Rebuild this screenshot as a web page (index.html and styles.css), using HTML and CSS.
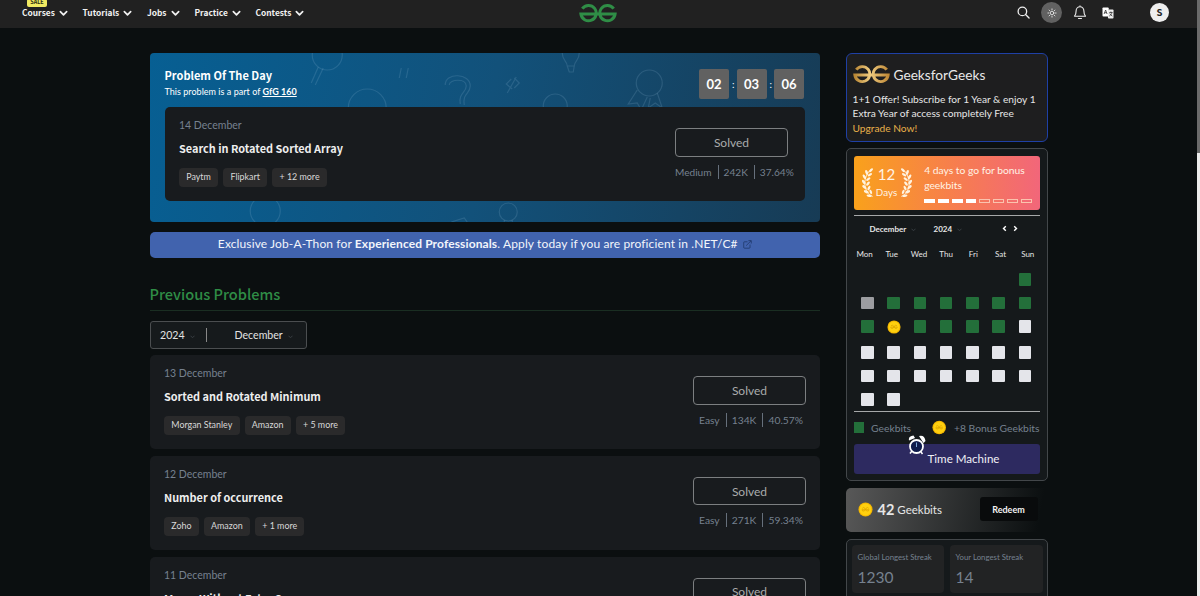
FILE: index.html
```
<!DOCTYPE html>
<html lang="en">
<head>
    <meta charset="UTF-8">
    <meta name="viewport" content="width=device-width, initial-scale=1.0">
    <title>Problem Of The Day | GeeksforGeeks</title>
    <link rel="stylesheet" href="styles.css">
</head>
<body>
    <!-- shared shapes -->
    <svg class="defs" width="0" height="0">
        <defs>
            <symbol id="chevron" viewBox="0 0 10 7"><path d="M1.5 1.5 5 5l3.500-3.500" fill="none" stroke="currentColor" stroke-width="1.900" stroke-linecap="round" stroke-linejoin="round"/></symbol>
            <symbol id="logo" viewBox="0 0 38 20">
                <path d="M3.300 5.600A7.700 7.700 0 1 1 1.900 11H36.100A7.700 7.700 0 1 1 34.700 5.600" fill="none" stroke-width="3"/>
            </symbol>
            <symbol id="coin" viewBox="0 0 16 16">
                <circle cx="8" cy="8" r="7.500" fill="#f5b700"/>
                <circle cx="8" cy="8" r="6.300" fill="#ffd00f"/>
                <path d="M4.500 6.800A1.800 1.800 0 1 1 4.200 8.200H11.800A1.800 1.800 0 1 1 11.500 6.800" fill="none" stroke="#dda400" stroke-width=".8"/>
            </symbol>
            <symbol id="laurel" viewBox="0 0 13 33">
                <path d="M11.500 31C2 27 0 12 8.500 3" fill="none" stroke="#fff3df" stroke-width="1"/>
                <g fill="#fff3df">
                    <ellipse cx="9.800" cy="2.600" rx="2.700" ry="1.300" transform="rotate(-45 9.800 2.600)"/>
                    <ellipse cx="5" cy="5" rx="2.800" ry="1.400" transform="rotate(70 5 5)"/>
                    <ellipse cx="8.500" cy="7.500" rx="2.700" ry="1.300" transform="rotate(-30 8.500 7.500)"/>
                    <ellipse cx="2.600" cy="9.800" rx="2.800" ry="1.400" transform="rotate(60 2.600 9.800)"/>
                    <ellipse cx="6.800" cy="12.300" rx="2.700" ry="1.300" transform="rotate(-35 6.800 12.300)"/>
                    <ellipse cx="1.900" cy="15.500" rx="2.800" ry="1.400" transform="rotate(55 1.900 15.500)"/>
                    <ellipse cx="6.500" cy="17.200" rx="2.700" ry="1.300" transform="rotate(-50 6.500 17.200)"/>
                    <ellipse cx="2.600" cy="21" rx="2.800" ry="1.400" transform="rotate(42 2.600 21)"/>
                    <ellipse cx="7.500" cy="22" rx="2.700" ry="1.300" transform="rotate(-65 7.500 22)"/>
                    <ellipse cx="4.600" cy="26" rx="2.800" ry="1.400" transform="rotate(25 4.600 26)"/>
                    <ellipse cx="9.500" cy="26.200" rx="2.500" ry="1.300" transform="rotate(70 9.500 26.200)"/>
                    <ellipse cx="7.700" cy="30.300" rx="2.800" ry="1.300" transform="rotate(10 7.700 30.300)"/>
                </g>
            </symbol>
        </defs>
    </svg>

    <header class="navbar">
        <ul class="menu">
            <li class="m-courses">Courses <svg><use href="#chevron"/></svg><span class="sale">SALE</span></li>
            <li class="m-tutorials">Tutorials <svg><use href="#chevron"/></svg></li>
            <li class="m-jobs">Jobs <svg><use href="#chevron"/></svg></li>
            <li class="m-practice">Practice <svg><use href="#chevron"/></svg></li>
            <li>Contests <svg><use href="#chevron"/></svg></li>
        </ul>
        <svg class="logo"><use href="#logo"/></svg>
        <div class="tools">
            <svg class="search" viewBox="0 0 14 14"><circle cx="5.800" cy="5.800" r="4.600"/><path d="m9.200 9.200 3.800 3.800"/></svg>
            <span class="theme">
                <svg viewBox="0 0 14 14"><circle cx="7" cy="7" r="2.100"/><path d="M7 2.200v1M7 10.800v1M2.200 7h1M10.800 7h1M3.600 3.600l.7.7M9.700 9.700l.7.7M3.600 10.400l.7-.7M9.700 4.300l.7-.7"/></svg>
            </span>
            <svg class="bell" viewBox="0 0 14 15"><path d="M1.500 11.200h11c-1.300-1.400-1.600-2.300-1.600-5.200C10.900 3.600 9.400 1.800 7 1.800S3.100 3.600 3.100 6c0 2.900-.3 3.800-1.600 5.200zM5.500 13.500h3M7 .8v1"/></svg>
            <svg class="lang" viewBox="0 0 12 12">
                <rect x=".5" y=".5" width="6.200" height="9" rx=".8" fill="#fff"/>
                <rect x="6" y="2.500" width="5.500" height="9" rx=".8" fill="#eee"/>
                <path d="m2.100 7 1.500-4 1.500 4M2.600 5.700h2M7.300 5.500h3.200M8.900 4.500v1M10 5.500c-.4 1.700-1.300 2.700-2.600 3.500M7.800 6.500c.6 1.200 1.300 2 2.600 2.600" fill="none" stroke="#333" stroke-width=".8"/>
            </svg>
            <span class="avatar">S</span>
        </div>
    </header>

    <main class="page">
        <section class="problems">
            <div class="potd">
                <svg class="doodles" viewBox="0 0 670 169">
                    <circle cx="177" cy="2" r="15"/><path d="m168 14-7 16M173 15l-8 17M251 15l-2 10M258 15l-2 10"/>
                    <circle cx="217" cy="55" r="19"/>
                    <path d="M295 32c0-13 25-12 25 1 0 8-8 7-6 19M299 32c0-6 17-7 17 1 0 7-8 7-6 18"/>
                    <circle cx="405" cy="53" r="12"/>
                    <path d="m361 26-5 5 6 5M364 35l5-5-5-5M366 24l-9 16M412 0c0 8 5 8 5 13h7c0-5 5-5 5-13M417 13l2 6h4l1-6"/>
                    <circle cx="499" cy="30" r="13"/>
                    <path d="m487 37-9 14 9-1 4 7 6-13M507 40l5 15-7-5-7 5 2-10"/>
                    <circle cx="115" cy="158" r="15"/><path d="m301 169 13-4 3 4"/>
                    <circle cx="358" cy="159" r="9"/><path d="M354 167v3h8v-3"/>
                </svg>
                <div class="potd-top">
                    <div>
                        <h1>Problem Of The Day</h1>
                        <p>This problem is a part of <a href="#">GfG 160</a></p>
                    </div>
                    <div class="timer">
                        <b>02</b><i>:</i><b>03</b><i>:</i><b>06</b>
                    </div>
                </div>
                <article class="problem problem-today">
                    <div class="info">
                        <span class="date">14 December</span>
                        <h3>Search in Rotated Sorted Array</h3>
                        <div class="tags"><span>Paytm</span><span>Flipkart</span><span>+ 12 more</span></div>
                    </div>
                    <div class="status">
                        <button>Solved</button>
                        <div class="stats"><span>Medium</span><span>242K</span><span>37.64%</span></div>
                    </div>
                </article>
            </div>

            <a class="banner" href="#">
                <span>Exclusive Job-A-Thon for <b>Experienced Professionals</b>. Apply today if you are proficient in .NET/C#</span>
                <svg viewBox="0 0 10 10"><path d="M5 2H1.500Q.8 2 .8 2.700v5.600q0 .8.7.8H7q.8 0 .8-.8V5M3.500 6.300 9 .8M6 .7h3.200v3.200"/></svg>
            </a>

            <h2>Previous Problems</h2>

            <div class="filter">
                <span class="year">2024 <svg><use href="#chevron"/></svg></span>
                <span class="month">December <svg><use href="#chevron"/></svg></span>
            </div>

            <article class="problem">
                <div class="info">
                    <span class="date">13 December</span>
                    <h3>Sorted and Rotated Minimum</h3>
                    <div class="tags"><span>Morgan Stanley</span><span>Amazon</span><span>+ 5 more</span></div>
                </div>
                <div class="status">
                    <button>Solved</button>
                    <div class="stats"><span>Easy</span><span>134K</span><span>40.57%</span></div>
                </div>
            </article>
            <article class="problem">
                <div class="info">
                    <span class="date">12 December</span>
                    <h3>Number of occurrence</h3>
                    <div class="tags"><span>Zoho</span><span>Amazon</span><span>+ 1 more</span></div>
                </div>
                <div class="status">
                    <button>Solved</button>
                    <div class="stats"><span>Easy</span><span>271K</span><span>59.34%</span></div>
                </div>
            </article>
            <article class="problem">
                <div class="info">
                    <span class="date">11 December</span>
                    <h3>Merge Without Extra Space</h3>
                </div>
                <div class="status">
                    <button>Solved</button>
                </div>
            </article>
        </section>

        <aside class="sidebar">
            <div class="offer">
                <div class="brand">
                    <svg viewBox="0 0 38 20">
                        <defs><linearGradient id="gold" x2="1"><stop offset="0" stop-color="#b98735"/><stop offset=".45" stop-color="#efcb80"/><stop offset="1" stop-color="#c08a38"/></linearGradient></defs>
                        <g stroke="url(#gold)"><use href="#logo"/></g>
                    </svg>
                    <span>GeeksforGeeks</span>
                </div>
                <p>1+1 Offer! Subscribe for 1 Year &amp; enjoy 1<br>Extra Year of access completely Free<br><a href="#">Upgrade Now!</a></p>
            </div>

            <div class="streak-card">
                <div class="streak">
                    <div class="wreath">
                        <svg><use href="#laurel"/></svg>
                        <div><b>12</b><span>Days</span></div>
                        <svg class="flip"><use href="#laurel"/></svg>
                    </div>
                    <div class="goal">
                        <p>4 days to go for bonus<br>geekbits</p>
                        <div class="steps">
                            <i class="on"></i><i class="on"></i><i class="on"></i><i class="on"></i><i></i><i></i><i></i><i></i>
                        </div>
                    </div>
                </div>

                <div class="cal-head">
                    <span class="cal-month">December <svg><use href="#chevron"/></svg></span>
                    <span class="cal-year">2024 <svg><use href="#chevron"/></svg></span>
                    <svg class="arrow" viewBox="0 0 5 7"><path d="M3.800 1.200 1.500 3.500l2.300 2.300"/></svg>
                    <svg class="arrow" viewBox="0 0 5 7"><path d="m1.200 1.200 2.300 2.300-2.300 2.300"/></svg>
                </div>
                <div class="weekdays">
                    <span>Mon</span><span>Tue</span><span>Wed</span><span>Thu</span><span>Fri</span><span>Sat</span><span>Sun</span>
                </div>
                <div class="days">
                    <i class="done first"></i>
                    <i class="missed"></i><i class="done"></i><i class="done"></i><i class="done"></i><i class="done"></i><i class="done"></i><i class="done"></i>
                    <i class="done"></i><svg class="coin"><use href="#coin"/></svg><i class="done"></i><i class="done"></i><i class="done"></i><i class="done"></i><i></i>
                    <i></i><i></i><i></i><i></i><i></i><i></i><i></i>
                    <i></i><i></i><i></i><i></i><i></i><i></i><i></i>
                    <i></i><i></i>
                </div>
                <div class="legend">
                    <i></i><span>Geekbits</span>
                    <svg><use href="#coin"/></svg><span class="bonus">+8 Bonus Geekbits</span>
                </div>
                <button class="time-machine">
                    <svg viewBox="0 0 18 20">
                        <g fill="#fff"><path d="M1 5.500Q0 1 5.500.5L7 3zM11 1q5.500-1.500 6.500 5L15.500 8z"/></g>
                        <path d="m4 16-2 2.500M13 17l1.500 2" stroke="#fff" stroke-width="1.500"/>
                        <circle cx="8.500" cy="11.500" r="6.500" fill="#101c4c" stroke="#fff" stroke-width="1.800"/>
                        <path d="M8.500 12V7.500" stroke="#7fa8d8" stroke-width="1"/>
                    </svg>
                    Time Machine
                </button>
            </div>

            <div class="geekbits">
                <svg><use href="#coin"/></svg>
                <b>42</b><span>Geekbits</span>
                <button>Redeem</button>
            </div>

            <div class="longest">
                <div><span>Global Longest Streak</span><b>1230</b></div>
                <div><span>Your Longest Streak</span><b>14</b></div>
            </div>
        </aside>
    </main>
    <div class="scrollbar"><i></i></div>
</body>
</html>
```
FILE: styles.css
```
* {
    box-sizing: border-box;
}

body {
    margin: 0;
    height: 596px;
    overflow: hidden;
    background-color: #0b0f10;
    color: #e6e6e6;
    font-family: Lato, "Open Sans", sans-serif;
    font-size: 11px;
}

h1, h2, h3, p, ul {
    margin: 0;
    padding: 0;
}

h1, h2, h3, .menu, .avatar {
    font-family: "Noto Sans CJK SC", "Noto Sans", sans-serif;
}

i {
    font-style: normal;
}

button {
    font-family: inherit;
    padding: 0;
}

.defs {
    position: absolute;
}

/* top navigation */
.navbar {
    display: grid;
    grid-template-columns: 579px 38px 1fr;
    height: 28px;
    padding-right: 31px;
    background-color: #212121;
}

.menu {
    display: flex;
    list-style: none;
    padding-left: 22px;
    height: 24px;
    align-items: center;
    font-size: 8.4px;
    font-weight: 700;
    line-height: 12px;
    color: #f1f1f1;
}

.menu li {
    position: relative;
    display: flex;
    align-items: center;
    gap: 4px;
}

.menu svg {
    width: 9px;
    height: 7px;
    margin-top: 2px;
}

.m-courses {
    width: 60.500px;
}

.m-tutorials {
    width: 64.500px;
}

.m-jobs {
    width: 47.500px;
}

.m-practice {
    width: 61px;
}

.sale {
    position: absolute;
    left: 5px;
    top: -7px;
    width: 20px;
    height: 8px;
    border-radius: 2px;
    background-color: #f1ea62;
    color: #2b2a10;
    font-size: 5.5px;
    line-height: 7px;
    text-align: center;
}

.logo {
    width: 38px;
    height: 20px;
    margin-top: 3px;
    stroke: #2f8d46;
}

.tools {
    display: flex;
    justify-content: flex-end;
    align-items: center;
    height: 25px;
}

.search {
    width: 13px;
    height: 13px;
    margin-right: 11px;
    fill: none;
    stroke: #eee;
    stroke-width: 1.4;
    stroke-linecap: round;
}

.theme {
    display: flex;
    align-items: center;
    justify-content: center;
    width: 21px;
    height: 21px;
    margin-right: 11px;
    border-radius: 50%;
    background-color: #616161;
}

.theme svg {
    width: 12px;
    height: 12px;
    fill: none;
    stroke: #eee;
    stroke-width: 1;
    stroke-linecap: round;
}

.bell {
    width: 14px;
    height: 15px;
    margin-right: 15px;
    fill: none;
    stroke: #eee;
    stroke-width: 1.1;
    stroke-linejoin: round;
    stroke-linecap: round;
}

.lang {
    width: 12px;
    height: 12px;
    margin-right: 36px;
}

.avatar {
    width: 19px;
    height: 19px;
    border-radius: 50%;
    background-color: #eee;
    color: #222;
    font-size: 9.5px;
    font-weight: 700;
    line-height: 18px;
    text-align: center;
}

.page {
    display: grid;
    grid-template-columns: 670.5px 202px;
    column-gap: 25.500px;
    align-items: start;
    padding: 25px 0 0 149.5px;
    height: 568px;
    overflow: hidden;
}

/* problem of the day */
.potd {
    position: relative;
    height: 169px;
    padding: 0 15px;
    border-radius: 4px;
    background: linear-gradient(100deg, #075f93 0%, #12517a 50%, #173b55 100%);
}

.doodles {
    position: absolute;
    left: 0;
    top: 0;
    width: 100%;
    height: 100%;
    fill: none;
    stroke: rgba(150, 190, 215, .18);
    stroke-width: 1.2;
}

.potd-top {
    position: relative;
    display: flex;
    justify-content: space-between;
    height: 54px;
    color: #fff;
}

.potd h1 {
    margin-top: 15px;
    font-size: 11px;
    line-height: 15px;
}

.potd p {
    font-size: 9px;
    line-height: 17px;
    letter-spacing: .03px;
}

.potd p a {
    color: #fff;
    font-weight: 700;
}

.timer {
    display: flex;
    gap: 3px;
    margin: 16px 1px 0 0;
    line-height: 30px;
}

.timer b {
    width: 30px;
    height: 30px;
    border-radius: 2px;
    background-color: #616161;
    font-size: 13px;
    text-align: center;
}

.timer i {
    width: 1.5px;
    font-size: 10px;
}

.problem {
    display: flex;
    justify-content: space-between;
    height: 94px;
    margin-bottom: 6.800px;
    padding: 0 14.500px;
    border-radius: 5px;
    background-color: #181b1e;
}

.problem-today {
    position: relative;
    padding-right: 11px;
}

.date {
    display: block;
    margin-top: 10px;
    font-size: 10.5px;
    line-height: 16px;
    color: #76818f;
}

.problem h3 {
    margin-top: 6px;
    font-size: 10.9px;
    line-height: 18px;
    color: #eee;
}

.tags {
    display: flex;
    gap: 5px;
    margin-top: 11px;
}

.tags span {
    height: 19px;
    padding: 0 7.3px;
    border-radius: 4px;
    background-color: #2a2a2b;
    color: #d8d8d8;
    font-size: 8.9px;
    line-height: 18px;
}

.status {
    width: 112.5px;
    padding-top: 21px;
}

.problem-today .status {
    width: 119px;
}

.status button {
    display: block;
    width: 113px;
    height: 28.500px;
    border: 1px solid #7c7f81;
    border-radius: 4px;
    background: none;
    color: #a9abac;
    font-size: 12px;
}

.stats {
    display: flex;
    margin: 8px 0 0 6px;
    font-size: 10.3px;
    line-height: 14px;
    color: #76818f;
    white-space: nowrap;
}

.problem-today .stats {
    margin-left: 0;
    font-size: 10.1px;
}

.stats span + span {
    margin-left: 6px;
    padding-left: 5px;
    border-left: 1px solid #66707c;
}

.banner {
    display: flex;
    justify-content: center;
    align-items: center;
    gap: 5px;
    height: 26px;
    margin-top: 9.5px;
    padding-bottom: 2px;
    border-radius: 5px;
    background-color: #4163ae;
    color: #f2f5fb;
    font-size: 12px;
    letter-spacing: .12px;
    text-decoration: none;
}

.banner svg {
    width: 9px;
    height: 9px;
    margin-top: 2px;
    fill: none;
    stroke: #233c70;
    stroke-width: 1;
}

.problems h2 {
    height: 39px;
    margin: 14.500px 0 10px;
    padding-top: 10px;
    border-bottom: 1px solid #1a2e22;
    color: #2f8d46;
    font-size: 14.600px;
    font-weight: 500;
    line-height: 24px;
}

.filter {
    display: flex;
    align-items: center;
    width: 157.500px;
    height: 28px;
    margin-bottom: 6px;
    padding-bottom: 1px;
    border: 1px solid #4b4e50;
    border-radius: 3px;
    background-color: #161a1c;
    color: #e2e2e2;
    font-size: 10.6px;
}

.filter svg,
.cal-head span svg {
    width: 5px;
    height: 4px;
    margin-left: 3px;
    color: #3a4045;
}

.year {
    width: 56px;
    padding-left: 9.500px;
    border-right: 1px solid #888;
    line-height: 14px;
}

.month {
    padding-left: 28px;
}

/* sidebar */
.offer {
    height: 89px;
    margin-bottom: 6px;
    padding: 10px 6px;
    border: 1px solid #1f40a5;
    border-radius: 6px;
    background-color: #1e1e1f;
}

.brand {
    display: flex;
    align-items: center;
    gap: 4px;
    height: 20px;
    margin-bottom: 8px;
    color: #e8e8e8;
    font-size: 13.700px;
}

.brand svg {
    width: 37px;
    height: 20px;
}

.offer p {
    font-size: 10.2px;
    line-height: 14.400px;
    white-space: nowrap;
}

.offer a {
    color: #e8b04a;
    text-decoration: none;
}

.streak-card {
    height: 333px;
    margin-bottom: 7px;
    padding: 7px 7px 0;
    border: 1px solid #43474a;
    border-radius: 5px;
    background-color: #15191b;
}

.streak {
    display: flex;
    height: 54px;
    padding: 0 8px;
    border-radius: 3px;
    background: linear-gradient(90deg, #f9a11b, #f7804a 50%, #f2667a);
    color: #fff3e6;
}

.wreath {
    display: flex;
    width: 64px;
    padding-top: 11px;
}

.wreath svg {
    width: 12px;
    height: 32px;
}

.wreath .flip {
    transform: scaleX(-1);
}

.wreath div {
    display: flex;
    flex-direction: column;
    width: 26px;
    align-items: center;
}

.wreath b {
    font-size: 15px;
    font-weight: 400;
    line-height: 15px;
}

.wreath div span {
    font-size: 9.8px;
    line-height: 20px;
}

.goal p {
    padding-top: 7px;
    font-size: 10.3px;
    line-height: 14.5px;
    white-space: nowrap;
}

.steps {
    display: flex;
    gap: 3px;
    margin-top: 7px;
}

.steps i {
    width: 10.800px;
    height: 4px;
    border: 1px solid #fbc3ae;
}

.steps .on {
    border-color: #fff;
    background-color: #fff;
}

.cal-head {
    display: flex;
    align-items: center;
    height: 26px;
    margin-top: 5px;
    padding-left: 16px;
    border-top: 1px solid #a6a8a9;
    font-size: 8px;
    font-weight: 700;
}

.cal-month {
    width: 64px;
}

.cal-year {
    width: 68px;
}

.arrow {
    width: 5px;
    height: 7px;
    margin-right: 6px;
    fill: none;
    stroke: #fff;
    stroke-width: 1.4;
}

.weekdays {
    display: grid;
    grid-template-columns: repeat(7, 27.200px);
    margin-left: -2.500px;
    height: 26px;
    font-size: 8px;
    line-height: 27px;
    text-align: center;
}

.days {
    display: grid;
    grid-template-columns: repeat(7, 12.500px);
    grid-template-rows: 12.500px 12.500px 15px 12.500px 12.500px 12.500px;
    column-gap: 13.750px;
    row-gap: 11px;
    height: 145px;
    padding: 6px 0 0 7.500px;
    border-bottom: 1px solid #a6a8a9;
}

.days i {
    height: 12.500px;
    border-radius: 1px;
    background-color: #e4e5ea;
}

.days .done {
    background-color: #236f3a;
}

.days .first {
    grid-column: 7;
}

.days .missed {
    background-color: #9c9da1;
}

.coin {
    width: 14px;
    height: 14px;
}

.legend {
    display: flex;
    align-items: center;
    height: 31.500px;
    color: #76818f;
    font-size: 10.3px;
    white-space: nowrap;
}

.legend i {
    width: 11px;
    height: 11px;
    margin-right: 7px;
    background-color: #236f3a;
}

.legend svg {
    width: 15px;
    height: 15px;
    margin: 0 7.500px 0 21px;
}

.time-machine {
    position: relative;
    display: block;
    width: 186px;
    height: 30px;
    padding-left: 34px;
    border: 0;
    border-radius: 3px;
    background-color: #2d2a60;
    color: #f0f0f5;
    font-size: 11.6px;
}

/* the clock sticks out above the button */
.time-machine svg {
    position: absolute;
    left: 54px;
    top: -9px;
    width: 18px;
    height: 20px;
}

.geekbits {
    display: flex;
    align-items: center;
    height: 44px;
    margin-bottom: 7px;
    padding: 0 0 2px 12px;
    border-radius: 5px;
    background: linear-gradient(100deg, #585858, #0b0f10 95%);
    font-size: 11.5px;
}

.geekbits svg {
    width: 15px;
    height: 15px;
    margin-right: 5px;
}

.geekbits b {
    margin-right: 3px;
    font-size: 14.5px;
}

.geekbits span {
    flex: 1;
}

.geekbits button {
    width: 58px;
    height: 24px;
    margin-right: 10px;
    border: 0;
    border-radius: 3px;
    background-color: #090b0c;
    color: #f2f2f2;
    font-size: 9px;
    font-weight: 700;
}

.longest {
    display: grid;
    grid-template-columns: 92px 93px;
    gap: 6px;
    height: 90px;
    padding: 5px;
    border: 1px solid #43474a;
    border-radius: 5px;
    background-color: #15191b;
}

.longest div {
    height: 48px;
    padding: 5px 6px;
    border-radius: 4px;
    background-color: #222324;
    color: #76818f;
}

.longest span {
    display: block;
    font-size: 7.8px;
    line-height: 14px;
    white-space: nowrap;
}

.longest b {
    font-size: 15.5px;
    font-weight: 400;
    line-height: 26px;
}

.scrollbar {
    position: fixed;
    right: 0;
    top: 0;
    width: 3px;
    height: 596px;
    background-color: #ececec;
}

.scrollbar i {
    display: block;
    height: 153px;
    background-color: #6b6b6b;
}
```
